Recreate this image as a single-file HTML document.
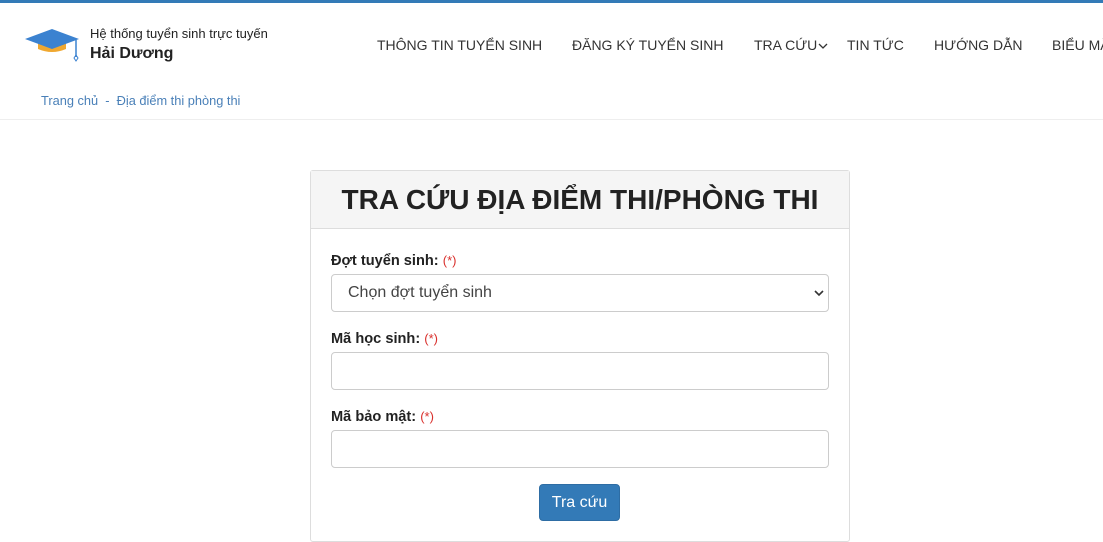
<!DOCTYPE html>
<html><head><meta charset="utf-8"><style>
body{margin:0;width:1103px;height:542px;overflow:hidden;background:#fff;font-family:"Liberation Sans",Arial,sans-serif;color:#222;position:relative}
.top{position:absolute;left:0;top:0;width:1103px;height:3px;background:#337ab7}
.abs{position:absolute;white-space:nowrap}
.nav{top:37px;font-size:14px;color:#333}
.hr{position:absolute;left:0;top:119px;width:1103px;height:1px;background:#eee}
.card{position:absolute;left:310px;top:170px;width:538px;height:370px;border:1px solid #ddd;border-radius:3px}
.head{height:57px;background:#f5f5f5;border-bottom:1px solid #ddd;text-align:center;font-weight:bold;font-size:28px;line-height:58px;color:#222}
label{position:absolute;left:20px;font-weight:bold;font-size:14.6px}
label span{color:#d9302c;font-weight:normal;font-size:13px}
.inp{position:absolute;left:20px;width:496px;height:36px;border:1px solid #ccc;border-radius:4px;font-size:16px;line-height:36px;color:#444}
.btn{position:absolute;left:228px;top:313px;width:81px;height:37px;background:#337ab7;border:1px solid #2e6da4;border-radius:4px;color:#fff;font-size:16px;line-height:36px;text-align:center;box-sizing:border-box}
</style></head><body>
<div class="top"></div>
<svg class="abs" style="left:24px;top:27px" width="56" height="36" viewBox="0 0 56 36">
<path d="M14 14 L14 22 Q28 28 42 22 L42 14 Z" fill="#f0a830"/>
<path d="M1 12 L28 2 L55 12 L28 22 Z" fill="#3b82d0"/>
<path d="M52 13 L52 30" stroke="#3b82d0" stroke-width="1.5"/>
<path d="M52 28 L54 31 L52 34 L50 31 Z" fill="none" stroke="#3b82d0" stroke-width="1"/>
</svg>
<div class="abs" style="left:90px;top:26px;font-size:13px;color:#222">Hệ thống tuyển sinh trực tuyến</div>
<div class="abs" style="left:90px;top:45px;font-size:16px;font-weight:bold;color:#222">Hải Dương</div>
<div class="abs nav" style="left:377px">THÔNG TIN TUYỂN SINH</div>
<div class="abs nav" style="left:572px">ĐĂNG KÝ TUYỂN SINH</div>
<div class="abs nav" style="left:754px">TRA CỨU<svg width="10" height="8" viewBox="0 0 10 8" style="margin-left:1px"><path d="M1 2 L5 6 L9 2" fill="none" stroke="#333" stroke-width="1.3"/></svg></div>
<div class="abs nav" style="left:847px">TIN TỨC</div>
<div class="abs nav" style="left:934px">HƯỚNG DẪN</div>
<div class="abs nav" style="left:1052px">BIỂU MẪU</div>
<div class="abs" style="left:41px;top:93px;font-size:12.8px;color:#4a80b8">Trang chủ&nbsp; - &nbsp;Địa điểm thi phòng thi</div>
<div class="hr"></div>
<div class="card">
<div class="head">TRA CỨU ĐỊA ĐIỂM THI/PHÒNG THI</div>
<label style="top:82px">Đợt tuyển sinh: <span>(*)</span></label>
<div class="inp" style="top:103px;padding-left:0"><span style="margin-left:16px">Chọn đợt tuyển sinh</span>
<svg style="position:absolute;right:4px;top:14px" width="10" height="8" viewBox="0 0 10 8"><path d="M1 2 L5 6 L9 2" fill="none" stroke="#333" stroke-width="1.6"/></svg></div>
<label style="top:160px">Mã học sinh: <span>(*)</span></label>
<div class="inp" style="top:181px"></div>
<label style="top:238px">Mã bảo mật: <span>(*)</span></label>
<div class="inp" style="top:259px"></div>
<div class="btn">Tra cứu</div>
</div>
</body></html>
